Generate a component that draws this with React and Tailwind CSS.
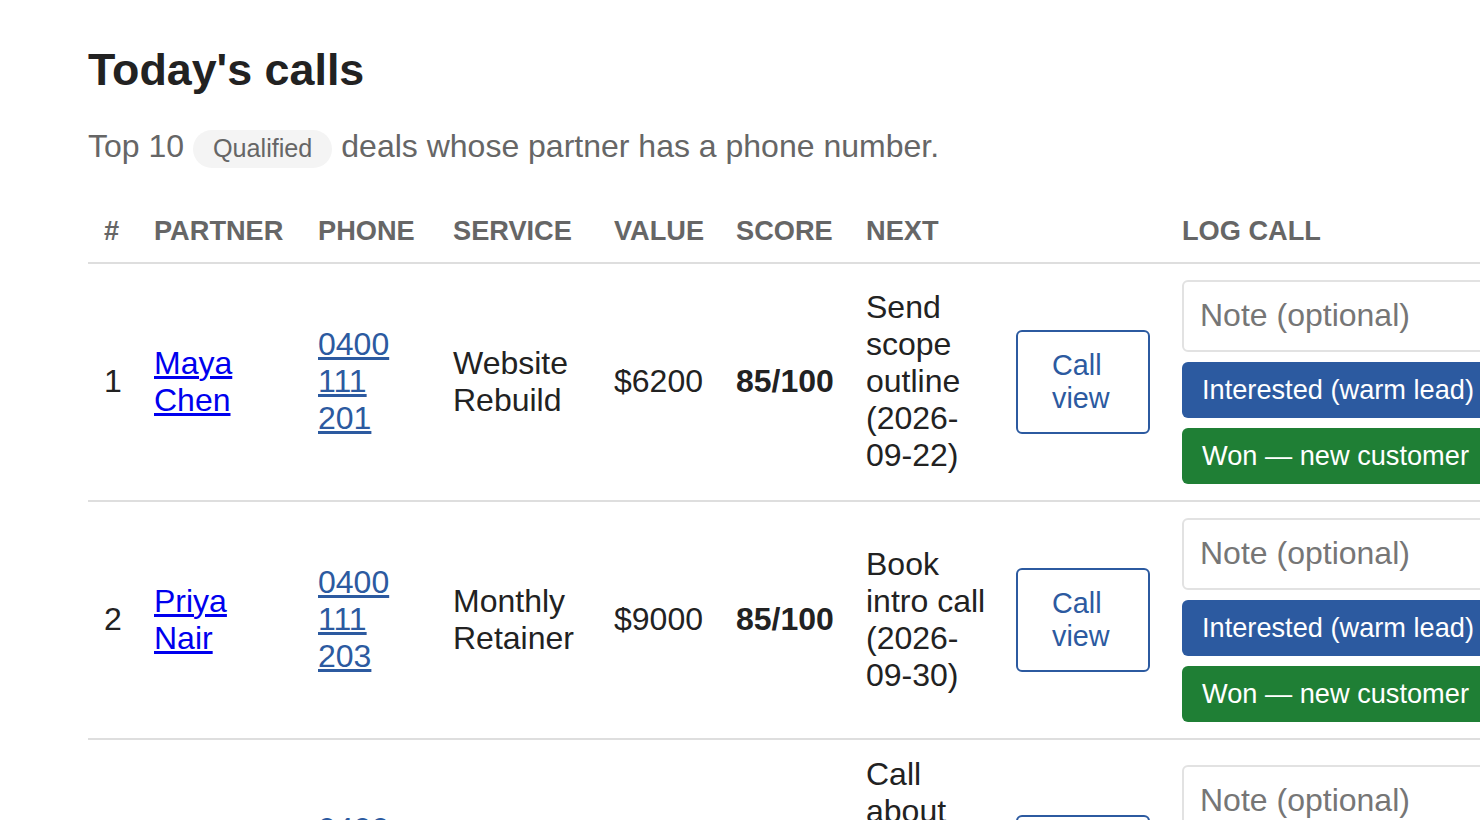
import React from "react";

const rows = [
  {
    n: 1,
    partner: ["Maya", "Chen"],
    phone: "0400 111 201",
    service: "Website Rebuild",
    value: "$6200",
    score: "85/100",
    next: "Send scope outline (2026-09-22)",
  },
  {
    n: 2,
    partner: ["Priya", "Nair"],
    phone: "0400 111 203",
    service: "Monthly Retainer",
    value: "$9000",
    score: "85/100",
    next: "Book intro call (2026-09-30)",
  },
  {
    n: 3,
    partner: ["Tom", "Walsh"],
    phone: "0400 111 205",
    service: "Brand Refresh",
    value: "$4800",
    score: "80/100",
    next: "Call about website quote (2026-10-02)",
  },
];

function Row({ r }) {
  const td = "px-4 py-4 align-middle border-b-2 border-[#dedede]";
  return (
    <tr>
      <td className={td}>{r.n}</td>
      <td className={td}>
        <a href="#" className="text-[#0000ee] underline">
          {r.partner.join(" ")}
        </a>
      </td>
      <td className={td}>
        <a href="#" className="text-[#2c5aa0] underline w-[72px] inline-block">
          {r.phone}
        </a>
      </td>
      <td className={td}>{r.service}</td>
      <td className={td}>{r.value}</td>
      <td className={td + " font-bold"}>{r.score}</td>
      <td className="pl-4 pr-[14px] py-4 align-middle border-b-2 border-[#dedede]">{r.next}</td>
      <td className={td}>
        <a
          href="#"
          className="inline-block border-2 border-[#2c5aa0] rounded-[6px] text-[#2c5aa0] text-[28.8px] leading-[33px] px-[34px] py-[17px] text-left w-[134px] bg-white"
        >
          Call view
        </a>
      </td>
      <td className={td}>
        <div className="flex flex-col gap-[10px] w-[330px]">
          <input
            type="text"
            placeholder="Note (optional)"
            className="h-[72px] w-full border-2 border-[#e2e2e2] rounded-[6px] px-4 text-[32px] text-[#222] placeholder:text-[#767676] outline-none bg-white"
          />
          <button className="h-[56px] w-full rounded-[6px] bg-[#2c5aa0] text-white text-[27.2px] text-left px-5 whitespace-nowrap">
            Interested (warm lead)
          </button>
          <button className="h-[56px] w-full rounded-[6px] bg-[#1f7f35] text-white text-[27.2px] text-left px-5 whitespace-nowrap">
            Won — new customer
          </button>
        </div>
      </td>
    </tr>
  );
}

export default function App() {
  const th = "px-4 pt-4 pb-[15px] text-left align-middle font-bold uppercase text-[#666] text-[27.2px] border-b-2 border-[#dedede] whitespace-nowrap";
  return (
    <div className="w-[1480px] h-[820px] overflow-hidden bg-white text-[#222] leading-[normal] font-['Liberation_Sans',Arial,sans-serif]">
      <div className="pl-[88px] pt-[43.5px]">
        <h1 className="text-[44.8px] font-bold leading-[normal] text-[#222]">Today's calls</h1>
        <p className="mt-[33.5px] text-[32px] text-[#666] whitespace-nowrap">
          Top 10{" "}
          <span className="inline-block rounded-full bg-[#f4f4f4] text-[#666] text-[25.2px] px-[20px] py-[4.5px]">
            Qualified
          </span>{" "}
          deals whose partner has a phone number.
        </p>
        <table className="mt-[31px] table-fixed w-[1430px] text-[32px] border-collapse">
          <colgroup>
            <col className="w-[50px]" />
            <col className="w-[164px]" />
            <col className="w-[135px]" />
            <col className="w-[161px]" />
            <col className="w-[122px]" />
            <col className="w-[130px]" />
            <col className="w-[150px]" />
            <col className="w-[166px]" />
            <col className="w-[352px]" />
          </colgroup>
          <thead>
            <tr>
              <th className={th}>#</th>
              <th className={th}>Partner</th>
              <th className={th}>Phone</th>
              <th className={th}>Service</th>
              <th className={th}>Value</th>
              <th className={th}>Score</th>
              <th className={th}>Next</th>
              <th className={th}></th>
              <th className={th}>Log call</th>
            </tr>
          </thead>
          <tbody>
            {rows.map((r) => (
              <Row key={r.n} r={r} />
            ))}
          </tbody>
        </table>
      </div>
    </div>
  );
}
